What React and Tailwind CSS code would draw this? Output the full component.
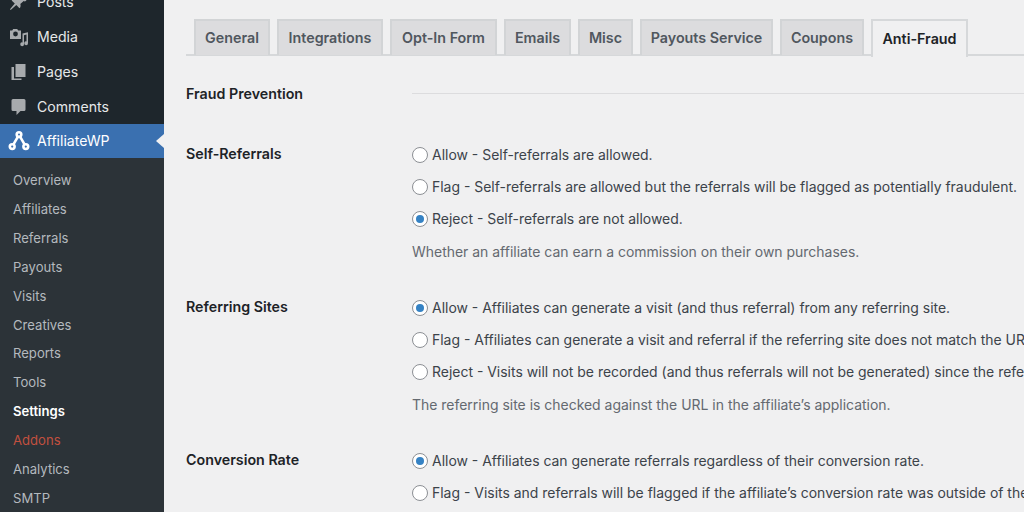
const font = { fontFamily: "Inter, 'Liberation Sans', sans-serif" };

const Pin = () => (
  <svg width="20" height="20" viewBox="0 0 20 20" fill="#a7aaad"><path d="M10.5 1.5l7 7-1.6 1-1.2-.6-3.4 3.2c.6 1.6.3 3-.8 4.2l-3.2-3.2-5.6 4.8-.7-.7 4.8-5.6-3.2-3.2c1.2-1.1 2.6-1.4 4.2-.8l3.2-3.4-.6-1.2z"/></svg>
);
const MediaIcon = () => (
  <svg width="20" height="20" viewBox="0 0 20 20" fill="#a7aaad">
    <path d="M1 3.5h2.2l1-1.5h4l1 1.5H12V12H1z M6.5 4.6a2.4 2.4 0 100 4.8 2.4 2.4 0 000-4.8z" fillRule="evenodd"/>
    <path d="M13.5 6.5l5.5-1.2v10.9a1.9 1.9 0 11-1.5-1.8V7.6l-2.5.6v9a1.9 1.9 0 11-1.5-1.8z"/>
  </svg>
);
const PagesIcon = () => (
  <svg width="20" height="20" viewBox="0 0 20 20" fill="#a7aaad">
    <path d="M6.5 2h10v13h-10z"/>
    <path d="M5 5H2.5v13h10v-1.5H5z"/>
  </svg>
);
const CommentIcon = () => (
  <svg width="20" height="20" viewBox="0 0 20 20" fill="#a7aaad">
    <path d="M4 2h11a1.5 1.5 0 011.5 1.5v9A1.5 1.5 0 0115 14h-3.5L7.5 18v-4H4a1.5 1.5 0 01-1.5-1.5v-9A1.5 1.5 0 014 2z"/>
  </svg>
);
const AffIcon = () => (
  <svg width="22" height="22" viewBox="0 0 22 22" fill="none" stroke="#fff" strokeWidth="2.6">
    <circle cx="11" cy="4.6" r="2.3" />
    <circle cx="4.2" cy="16.6" r="2.4" />
    <circle cx="17.8" cy="16.6" r="2.4" />
    <path d="M9.8 6.8L5.6 14.2M12.2 6.8l4.2 7.4" />
  </svg>
);

function MenuItem({ icon, label }) {
  return (
    <div className="flex h-[35px] items-center text-[14.1px] text-[#e6e8e9]">
      <span className="flex w-[37px] shrink-0 justify-center">{icon}</span>
      <span>{label}</span>
    </div>
  );
}

function Sub({ label, cls = "text-[#b4b9be]" }) {
  return <div className={`flex h-[28.9px] items-center pl-[13px] text-[13.1px] ${cls}`}>{label}</div>;
}

function Tab({ label, active, w }) {
  return (
    <div
      className={
        active
          ? `relative -mb-[2px] flex h-[38px] ${w} items-center justify-center border-2 border-b-0 border-[#d6d8da] bg-[#f0f0f1] text-[14.3px] font-semibold text-[#1d2327]`
          : `flex h-[36px] ${w} items-center justify-center border-2 border-b-0 border-[#d2d4d6] bg-[#dcdcde] text-[14.3px] font-semibold text-[#50575e]`
      }
    >
      {label}
    </div>
  );
}

function Radio({ checked, label }) {
  return (
    <div className="flex h-8 items-center gap-[4px] whitespace-nowrap text-[13.96px] text-[#3c434a]">
      <span className="flex h-4 w-4 shrink-0 items-center justify-center rounded-full border border-[#8c8f94] bg-white">
        {checked && <span className="h-2 w-2 rounded-full bg-[#3582c4]" />}
      </span>
      <span>{label}</span>
    </div>
  );
}

function Row({ title, opts, desc, cls }) {
  return (
    <div className={`grid grid-cols-[226px_1fr] ${cls}`}>
      <div className="pt-[6px] text-[14.25px] leading-[18px] font-semibold text-[#1d2327]">{title}</div>
      <div>
        {opts.map((o) => (
          <Radio key={o.label} {...o} />
        ))}
        {desc && <p className="mt-[8px] h-[18px] whitespace-nowrap text-[13.96px] leading-[18px] text-[#646970]">{desc}</p>}
      </div>
    </div>
  );
}

export default function App() {
  return (
    <div style={font} className="flex h-[512px] w-[1024px] overflow-hidden bg-[#f0f0f1] antialiased">
      <aside className="flex h-full w-[164px] shrink-0 flex-col overflow-hidden bg-[#1e262c]">
        <div className="-mt-[16px] shrink-0">
          <MenuItem icon={<Pin />} label="Posts" />
          <MenuItem icon={<MediaIcon />} label="Media" />
          <MenuItem icon={<PagesIcon />} label="Pages" />
          <MenuItem icon={<CommentIcon />} label="Comments" />
        </div>
        <div className="relative flex h-[34px] shrink-0 items-center bg-[#3a70b0] text-[14.1px] text-white">
          <span className="flex w-[37px] shrink-0 justify-center"><AffIcon /></span>
          <span>AffiliateWP</span>
          <span className="absolute right-0 top-[10px] h-0 w-0 border-y-[7px] border-r-[8px] border-y-transparent border-r-[#f0f0f1]" />
        </div>
        <div className="min-h-0 flex-1 bg-[#2c3338] pt-[8.5px]">
          <Sub label="Overview" />
          <Sub label="Affiliates" />
          <Sub label="Referrals" />
          <Sub label="Payouts" />
          <Sub label="Visits" />
          <Sub label="Creatives" />
          <Sub label="Reports" />
          <Sub label="Tools" />
          <Sub label="Settings" cls="font-semibold text-white" />
          <Sub label="Addons" cls="text-[#c2503f]" />
          <Sub label="Analytics" />
          <Sub label="SMTP" />
        </div>
      </aside>
      <main className="min-w-0 flex-1 pl-[22px] pt-[19px]">
        <div className="flex h-[37px] gap-[7px] border-b-2 border-[#d6d8da] pl-[8px]">
          <Tab label="General" w="w-[76px]" />
          <Tab label="Integrations" w="w-[106px]" />
          <Tab label="Opt-In Form" w="w-[107px]" />
          <Tab label="Emails" w="w-[67px]" />
          <Tab label="Misc" w="w-[55px]" />
          <Tab label="Payouts Service" w="w-[133px]" />
          <Tab label="Coupons" w="w-[84px]" />
          <Tab label="Anti-Fraud" w="w-[97px]" active />
        </div>
        <div className="grid grid-cols-[226px_1fr] items-center pt-[29px]">
          <div className="text-[14.25px] leading-[18px] font-semibold text-[#1d2327]">Fraud Prevention</div>
          <div className="-mt-[2px] h-px bg-[#dcdcde]" />
        </div>
        <Row
          cls="mt-[36px]"
          title="Self-Referrals"
          opts={[
            { label: "Allow - Self-referrals are allowed." },
            { label: "Flag - Self-referrals are allowed but the referrals will be flagged as potentially fraudulent." },
            { label: "Reject - Self-referrals are not allowed.", checked: true },
          ]}
          desc="Whether an affiliate can earn a commission on their own purchases."
        />
        <Row
          cls="mt-[31px]"
          title="Referring Sites"
          opts={[
            { label: "Allow - Affiliates can generate a visit (and thus referral) from any referring site.", checked: true },
            { label: "Flag - Affiliates can generate a visit and referral if the referring site does not match the URL in the affiliate’s application." },
            { label: "Reject - Visits will not be recorded (and thus referrals will not be generated) since the referring site does not match." },
          ]}
          desc="The referring site is checked against the URL in the affiliate’s application."
        />
        <Row
          cls="mt-[31px]"
          title="Conversion Rate"
          opts={[
            { label: "Allow - Affiliates can generate referrals regardless of their conversion rate.", checked: true },
            { label: "Flag - Visits and referrals will be flagged if the affiliate’s conversion rate was outside of the allowed range." },
          ]}
        />
      </main>
    </div>
  );
}
